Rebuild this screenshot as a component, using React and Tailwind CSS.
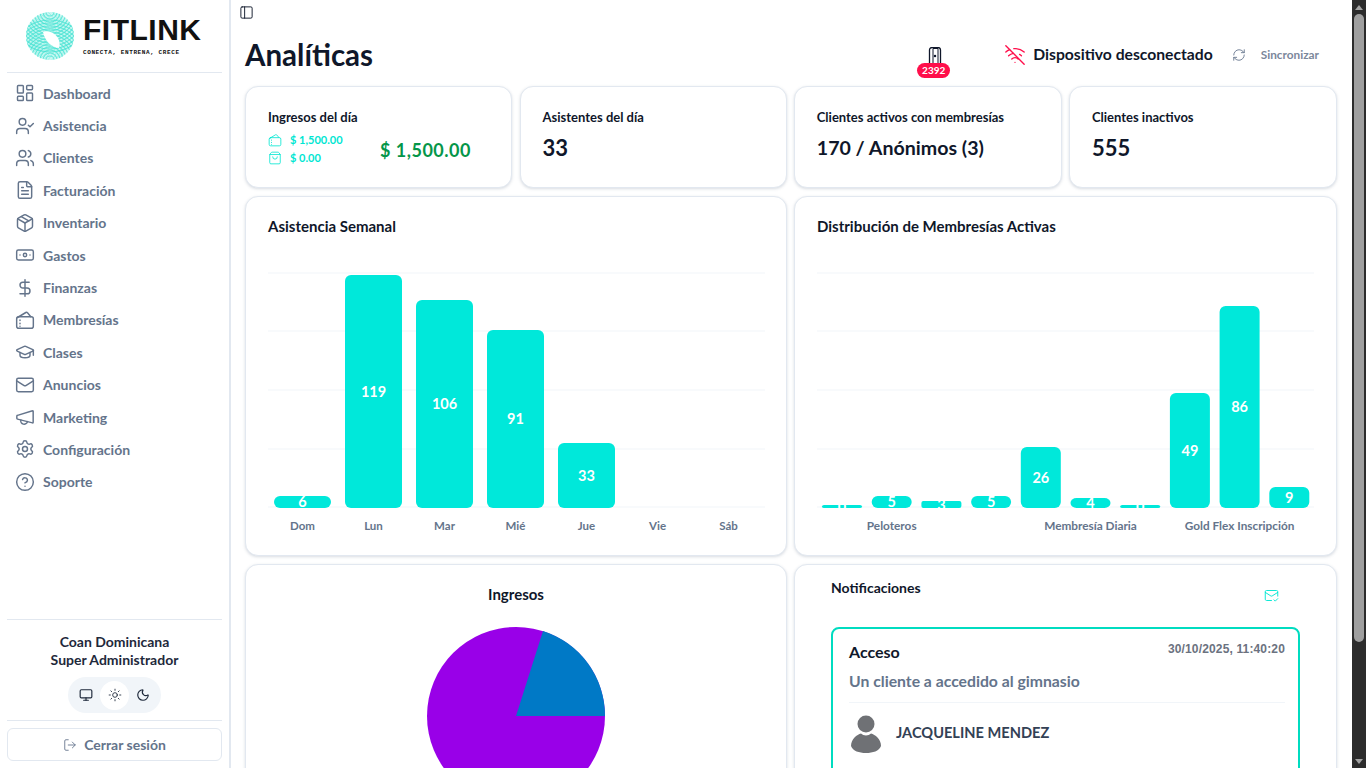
import React from "react";
import {
  LayoutDashboard,
  UserCheck,
  Users,
  FileText,
  Package,
  Banknote,
  DollarSign,
  GraduationCap,
  Mail,
  Settings,
  CircleHelp,
  PanelLeft,
  WifiOff,
  RefreshCw,
  MailCheck,
  ShoppingBag,
  Monitor,
  Sun,
  Moon,
  LogOut,
} from "lucide-react";

// wallet with a flap, lucide's one has no flap
function WalletFlap({ size = 20, strokeWidth = 1.75, className = "" }) {
  return (
    <svg width={size} height={size} viewBox="0 0 24 24" fill="none" stroke="currentColor" strokeWidth={strokeWidth} strokeLinecap="round" strokeLinejoin="round" className={className}>
      <rect x="2" y="8" width="20" height="14" rx="2.5" />
      <path d="M3 9 L13 3 a1.5 1.5 0 0 1 2 .4 L19 8" />
      <path d="M6 12v.5M6 16v.5M6 19.5v.01" />
    </svg>
  );
}

function MegaphoneLeft({ size = 20, strokeWidth = 1.75, className = "" }) {
  return (
    <svg width={size} height={size} viewBox="0 0 24 24" fill="none" stroke="currentColor" strokeWidth={strokeWidth} strokeLinecap="round" strokeLinejoin="round" className={className}>
      <path d="M3 10 L21 4.5 a.6 .6 0 0 1 .8 .6 V18.5 a.6 .6 0 0 1 -.8 .6 L3 14.5 a1 1 0 0 1 -.8 -1 V11 a1 1 0 0 1 .8 -1 Z" />
      <path d="M7 15.5 a4 4 0 0 0 8 2" />
    </svg>
  );
}

const menu = [
  { label: "Dashboard", icon: LayoutDashboard },
  { label: "Asistencia", icon: UserCheck },
  { label: "Clientes", icon: Users },
  { label: "Facturación", icon: FileText },
  { label: "Inventario", icon: Package },
  { label: "Gastos", icon: Banknote },
  { label: "Finanzas", icon: DollarSign },
  { label: "Membresías", icon: WalletFlap },
  { label: "Clases", icon: GraduationCap },
  { label: "Anuncios", icon: Mail },
  { label: "Marketing", icon: MegaphoneLeft },
  { label: "Configuración", icon: Settings },
  { label: "Soporte", icon: CircleHelp },
];

const weekly = [
  { day: "Dom", value: 6, h: 12 },
  { day: "Lun", value: 119, h: 233 },
  { day: "Mar", value: 106, h: 208 },
  { day: "Mié", value: 91, h: 178 },
  { day: "Jue", value: 33, h: 65 },
  { day: "Vie" },
  { day: "Sáb" },
];

const memberships = [
  { value: 0, h: 3 },
  { value: 5, h: 12, label: "Peloteros" },
  { value: 3, h: 7 },
  { value: 5, h: 12 },
  { value: 26, h: 61 },
  { value: 4, h: 10, label: "Membresía Diaria" },
  { value: 0, h: 3 },
  { value: 49, h: 115 },
  { value: 86, h: 202, label: "Gold Flex Inscripción" },
  { value: 9, h: 21 },
];

const gridLines = [18, 76, 135, 194, 252];

function Logo() {
  const rings = [4, 7, 10, 13, 16, 19, 22, 25, 28, 31, 34, 37, 40];
  return (
    <div className="flex items-center gap-[9px] h-[72px] pl-[19px] shrink-0">
      <svg width="48" height="48" viewBox="0 0 48 48">
        <defs>
          <clipPath id="logo-clip">
            <circle cx="24" cy="24" r="24" />
          </clipPath>
        </defs>
        <g clipPath="url(#logo-clip)">
          <rect width="48" height="48" fill="#c8f8f2" />
          {rings.map((r) => (
            <circle key={r} cx="24" cy="48" r={r} fill="none" stroke="#3fe0d0" strokeWidth="1.1" opacity="0.75" />
          ))}
          {rings.map((r) => (
            <circle key={r} cx="24" cy="0" r={r} fill="none" stroke="#3fe0d0" strokeWidth="1.1" opacity="0.75" />
          ))}
          {rings.map((r) => (
            <circle key={r} cx="0" cy="26" r={r} fill="none" stroke="#6ceadd" strokeWidth="0.8" opacity="0.6" />
          ))}
        </g>
        <path d="M17 20 C22 18 28 20 32 26 C34 30 34 33 33 36 C26 35 19 30 17 20 Z" fill="#ffffff" />
      </svg>
      <div className="flex flex-col font-['Liberation_Sans',sans-serif] text-[#111111]">
        <span className="text-[30px] leading-[28px] font-bold tracking-[0.5px]">FITLINK</span>
        <span className="text-[6px] leading-[9px] mt-[4px] font-bold tracking-[0.6px] font-['Liberation_Mono',monospace]">CONECTA, ENTRENA, CRECE</span>
      </div>
    </div>
  );
}

function Sidebar() {
  return (
    <aside className="w-[231px] shrink-0 h-full border-r-2 border-[#e2e8f0] bg-white flex flex-col px-[7px]">
      <Logo />
      <nav className="border-t border-[#e2e8f0] pt-[4px] flex flex-col">
        {menu.map(({ label, icon: Icon }) => (
          <div key={label} className="h-[32.4px] flex items-center gap-[8px] pl-[8px] text-[#64748b] text-[14px] font-bold">
            <Icon size={20} strokeWidth={1.75} />
            <span>{label}</span>
          </div>
        ))}
      </nav>
      <div className="mt-auto">
        <div className="border-t border-[#e2e8f0] pt-[13px] text-center text-[14px] leading-[18px] font-bold text-[#1e293b]">
          <p>Coan Dominicana</p>
          <p>Super Administrador</p>
        </div>
        <div className="flex justify-center mt-[8px] mb-[7px]">
          <div className="flex items-center bg-[#f1f5f9] rounded-full h-[36px] w-[93px] px-[4px] text-[#1e293b]">
            <span className="w-[28px] flex justify-center"><Monitor size={14} /></span>
            <span className="w-[29px] h-[29px] rounded-full bg-white flex items-center justify-center"><Sun size={14} strokeWidth={1.5} /></span>
            <span className="w-[28px] flex justify-center"><Moon size={14} /></span>
          </div>
        </div>
        <div className="border-t border-[#e2e8f0] pt-[7px] pb-[7px]">
          <div className="h-[33px] border border-[#e2e8f0] rounded-md flex items-center justify-center gap-[7px] text-[#64748b] text-[14px] font-bold">
            <LogOut size={14} strokeWidth={1.5} />
            Cerrar sesión
          </div>
        </div>
      </div>
    </aside>
  );
}

function Header() {
  return (
    <div className="flex items-center h-[38px] mt-[12px] mb-[12px]">
      <h1 className="text-[29.5px] leading-[38px] font-bold text-[#0f172a]">Analíticas</h1>
      <div className="ml-auto flex items-center">
        <div className="relative w-[40px] h-[30px] mr-[51px] mt-[14px]">
          <svg className="absolute left-[14px] top-0" width="16" height="18" viewBox="0 0 16 18" fill="none" stroke="#0f172a" strokeWidth="1.3">
            <path d="M0 17h16M2.5 17V3a2.5 2.5 0 0 1 2.5-2.5h6a2.5 2.5 0 0 1 2.5 2.5v14" />
            <path d="M6 17V1.5l5 0V17" strokeWidth="1" />
            <circle cx="8" cy="9" r="0.6" fill="#0f172a" />
          </svg>
          <span className="absolute left-[4px] top-[16px] h-[15px] w-[33px] rounded-full bg-[#ff0f4b] text-white text-[10px] leading-[15px] text-center font-bold">2392</span>
        </div>
        <WifiOff size={22} strokeWidth={1.5} className="text-[#ff0f4b]" />
        <span className="ml-[7px] text-[15.7px] font-bold text-[#0f172a]">Dispositivo desconectado</span>
        <RefreshCw size={14} strokeWidth={1.5} className="ml-[19px] text-[#64748b]" />
        <span className="ml-[15px] mr-[18px] text-[11.8px] font-bold text-[#7b879b]">Sincronizar</span>
      </div>
    </div>
  );
}

function Card({ className = "", children }) {
  return (
    <div className={`bg-white border border-[#e2e8f0] rounded-[13px] shadow-[0_1px_3px_rgba(100,116,139,0.25)] ${className}`}>
      {children}
    </div>
  );
}

function StatCard({ title, value, valueClass = "text-[22px]" }) {
  return (
    <Card className="h-[102px] pl-[22px] pt-[21px]">
      <p className="text-[13px] leading-[18px] font-bold text-[#0f172a]">{title}</p>
      <p className={`mt-[9px] leading-[26px] font-bold text-[#0f172a] ${valueClass}`}>{value}</p>
    </Card>
  );
}

function IncomeCard() {
  return (
    <Card className="h-[102px] pl-[22px] pt-[21px]">
      <p className="text-[13px] leading-[18px] font-bold text-[#0f172a]">Ingresos del día</p>
      <div className="flex items-center mt-[5px]">
        <div className="w-[112px] text-[#00e6d2] text-[11px] font-bold">
          <div className="flex items-center gap-[8px] h-[18px]"><WalletFlap size={14} strokeWidth={1.4} />$ 1,500.00</div>
          <div className="flex items-center gap-[8px] h-[18px]"><ShoppingBag size={14} strokeWidth={1.4} />$ 0.00</div>
        </div>
        <span className="text-[18px] font-bold text-[#059649] tracking-[0.5px] mt-[2px]">$ 1,500.00</span>
      </div>
    </Card>
  );
}

function WeeklyChart() {
  const slot = 71;
  return (
    <svg width="498" height="290" viewBox="0 0 498 290" className="block">
      {gridLines.map((y) => (
        <line key={y} x1="0" x2="497" y1={y} y2={y} stroke="#f1f5f9" />
      ))}
      {weekly.map((d, i) => {
        const x = 6 + i * slot;
        return (
          <g key={d.day}>
            {d.h && <rect x={x} y={253 - d.h} width="57" height={d.h} rx="6" fill="#00e8da" />}
            {d.h && (
              <text x={x + 28.5} y={253 - d.h / 2 + 5} textAnchor="middle" fill="#ffffff" fontSize="14.5" fontWeight="700">{d.value}</text>
            )}
            <text x={x + 28.5} y="275" textAnchor="middle" fill="#64748b" fontSize="11.5" fontWeight="700">{d.day}</text>
          </g>
        );
      })}
    </svg>
  );
}

function MembershipChart() {
  const slot = 49.7;
  return (
    <svg width="498" height="290" viewBox="0 0 498 290" className="block">
      {gridLines.map((y) => (
        <line key={y} x1="0" x2="497" y1={y} y2={y} stroke="#f1f5f9" />
      ))}
      {memberships.map((d, i) => {
        const x = 5 + i * slot;
        return (
          <g key={i}>
            <rect x={x} y={253 - d.h} width="40" height={d.h} rx={d.h < 8 ? 2 : 6} fill="#00e8da" />
            <text x={x + 20} y={253 - d.h / 2 + 5} textAnchor="middle" fill="#ffffff" fontSize="14.5" fontWeight="700">{d.value}</text>
            {d.label && (
              <text x={x + 20} y="275" textAnchor="middle" fill="#64748b" fontSize="11.8" fontWeight="700">{d.label}</text>
            )}
          </g>
        );
      })}
    </svg>
  );
}

function IncomePie() {
  return (
    <svg width="180" height="180" viewBox="0 0 180 180" className="block">
      <circle cx="90" cy="90" r="89" fill="#9900e8" />
      <path d="M90 90 L117 5 A89 89 0 0 1 179 90 Z" fill="#0079c6" />
    </svg>
  );
}

function Notifications() {
  return (
    <Card className="h-[400px] pl-[36px] pr-[36px] pt-[14px]">
      <div className="flex justify-between">
        <p className="text-[14px] leading-[18px] font-bold text-[#0f172a]">Notificaciones</p>
        <MailCheck size={15} strokeWidth={1.5} className="text-[#00e6d2] mt-[9px] mr-[21px]" />
      </div>
      <div className="mt-[24px] border-2 border-[#00dcc0] rounded-[8px] pl-[16px] pr-[13px] pt-[12px] h-[300px]">
        <div className="flex justify-between">
          <p className="text-[16px] leading-[20px] font-bold text-[#0f172a] mt-[1px]">Acceso</p>
          <p className="text-[12px] leading-[16px] font-bold text-[#6b7280] font-['Liberation_Sans',sans-serif] tracking-[0.15px]">30/10/2025, 11:40:20</p>
        </div>
        <p className="mt-[9px] text-[15.75px] leading-[20px] font-bold text-[#64748b]">Un cliente a accedido al gimnasio</p>
        <div className="mt-[11px] border-t border-[#f1f5f9] pt-[12px] flex items-center">
          <svg width="34" height="38" viewBox="0 0 34 38" fill="#6f7175">
            <circle cx="17" cy="9" r="8.5" />
            <path d="M2 31 C2 24 8 19.5 12 18.5 C14.5 21 19.5 21 22 18.5 C26 19.5 32 24 32 31 C30 36 24 38 17 38 C10 38 4 36 2 31 Z" />
          </svg>
          <span className="ml-[13px] text-[14.6px] font-bold text-[#334155] -mt-[2px]">JACQUELINE MENDEZ</span>
        </div>
      </div>
    </Card>
  );
}

function Scrollbar() {
  return (
    <div className="w-[14px] shrink-0 h-full bg-[#2c2c2c] flex flex-col items-center">
      <div className="h-[14px] flex items-center justify-center"><span className="border-x-[4px] border-x-transparent border-b-[5px] border-b-[#a3a3a3]" /></div>
      <div className="w-[10px] h-[628px] rounded-full bg-[#9f9f9f]" />
      <div className="mt-auto h-[14px] flex items-center justify-center"><span className="border-x-[4px] border-x-transparent border-t-[5px] border-t-[#a3a3a3]" /></div>
    </div>
  );
}

export default function App() {
  return (
    <div className="flex h-screen overflow-hidden bg-white font-['Lato',sans-serif]">
      <Sidebar />
      <main className="flex-1 min-w-0 overflow-hidden pl-[14px] pr-[15px]">
        <div className="h-[24px] pt-[5px] -ml-[6px]"><PanelLeft size={15} strokeWidth={1.5} className="text-[#0f172a]" /></div>
        <Header />
        <div className="grid grid-cols-[267.4px_267px_268px_268px] gap-[7.2px]">
          <IncomeCard />
          <StatCard title="Asistentes del día" value="33" />
          <StatCard title="Clientes activos con membresías" value="170 / Anónimos (3)" valueClass="text-[19.6px]" />
          <StatCard title="Clientes inactivos" value="555" />
        </div>
        <div className="grid grid-cols-[542px_543px] gap-[7px] mt-2">
          <Card className="h-[360px] pl-[22px] pt-[19px]">
            <p className="text-[15px] leading-[20px] font-bold text-[#0f172a] mb-[19px]">Asistencia Semanal</p>
            <WeeklyChart />
          </Card>
          <Card className="h-[360px] pl-[22px] pt-[19px]">
            <p className="text-[15px] leading-[20px] font-bold text-[#0f172a] mb-[19px]">Distribución de Membresías Activas</p>
            <MembershipChart />
          </Card>
        </div>
        <div className="grid grid-cols-[542px_543px] gap-[7px] mt-2">
          <Card className="h-[400px] pt-[19px] flex flex-col items-center">
            <p className="text-[15px] leading-[20px] font-bold text-[#0f172a] mb-[22px]">Ingresos</p>
            <IncomePie />
          </Card>
          <Notifications />
        </div>
      </main>
      <Scrollbar />
    </div>
  );
}
